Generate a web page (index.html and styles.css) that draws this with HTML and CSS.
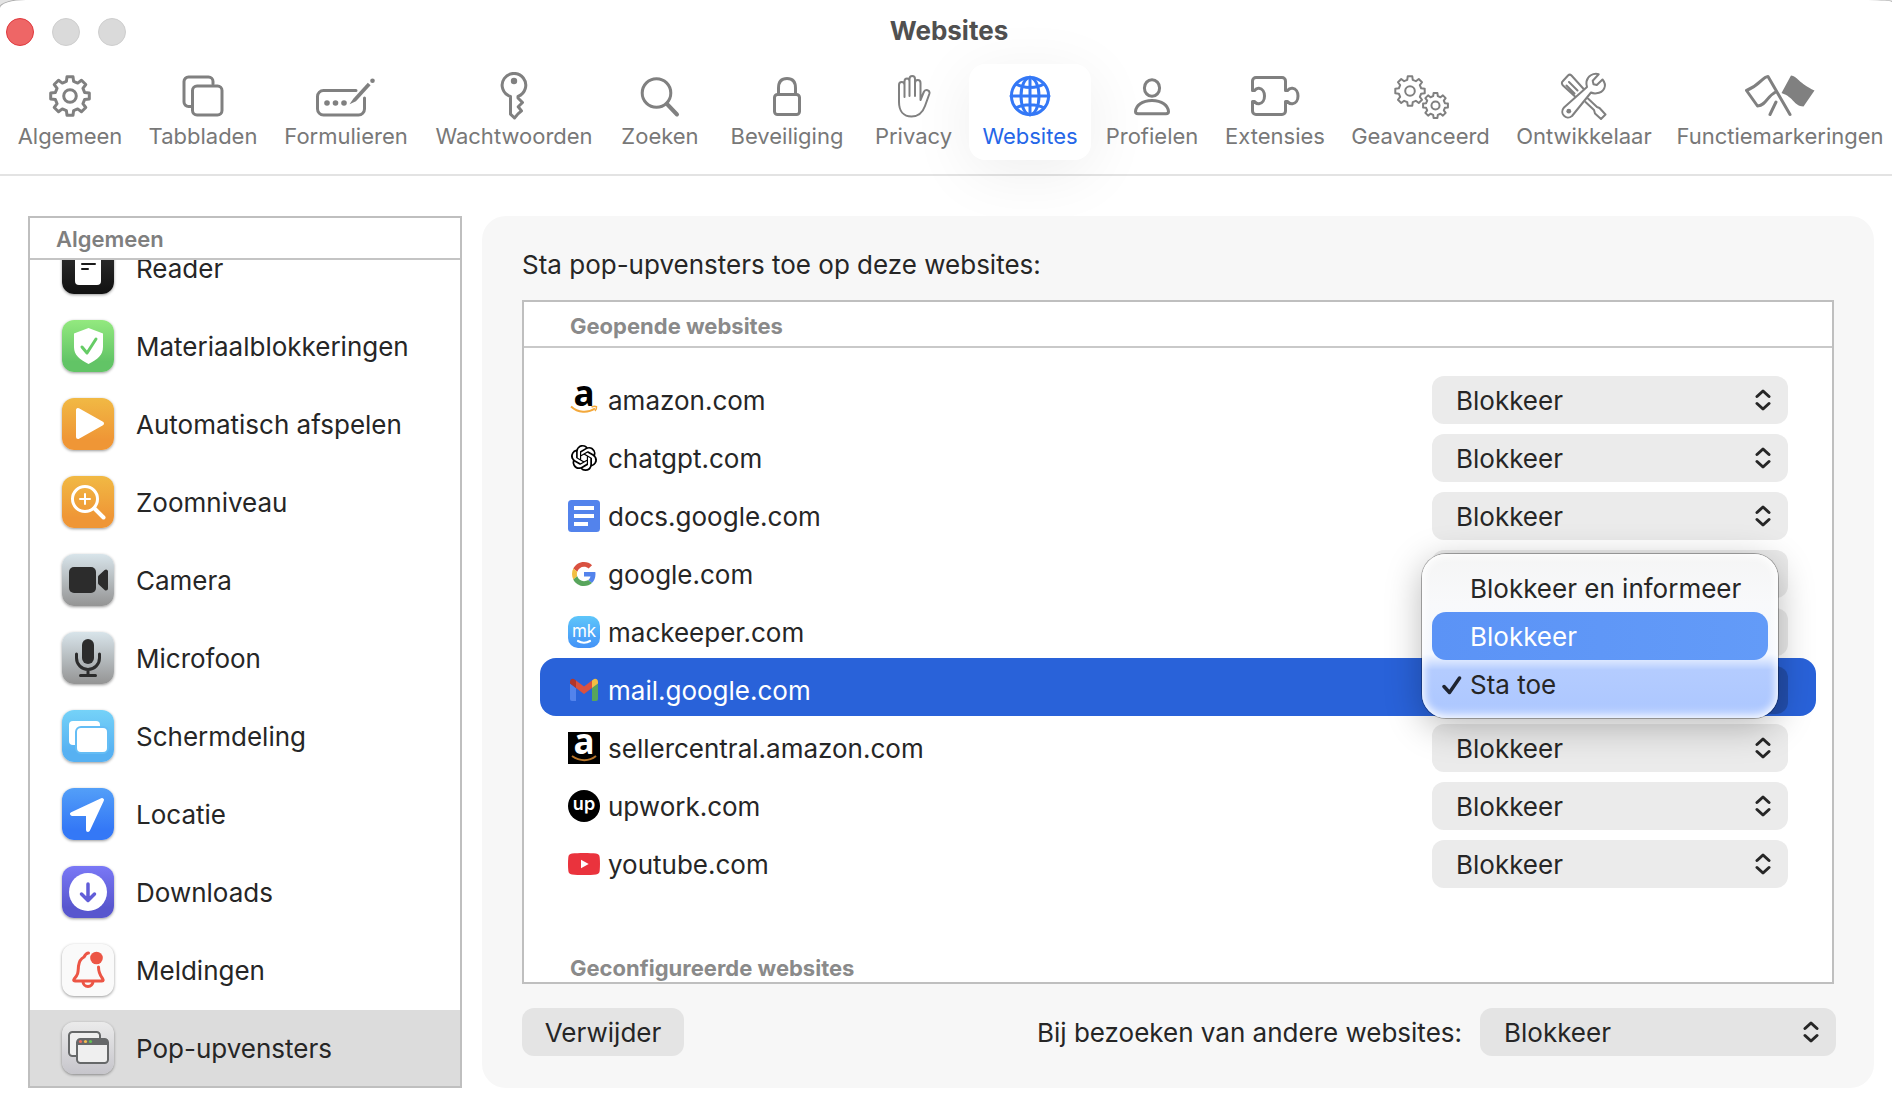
FILE: index.html
```html
<!DOCTYPE html>
<html lang="nl">
<head>
<meta charset="utf-8">
<meta name="viewport" content="width=device-width, initial-scale=1">
<title>Websites</title>
<link rel="stylesheet" href="styles.css">
</head>
<body>
<svg class="defs" aria-hidden="true">
  <symbol id="gear" viewBox="-21 -21 42 42">
    <path vector-effect="non-scaling-stroke" d="M-3.6-14.6-3-19.3 3-19.3 3.6-14.6 7.7-12.9 11.5-15.8 15.8-11.5 12.9-7.7 14.6-3.6 19.3-3 19.3 3 14.6 3.6 12.9 7.7 15.8 11.5 11.5 15.8 7.7 12.9 3.6 14.6 3 19.3-3 19.3-3.6 14.6-7.7 12.9-11.5 15.8-15.8 11.5-12.9 7.7-14.6 3.6-19.3 3-19.3-3-14.6-3.6-12.9-7.7-15.8-11.5-11.5-15.8-7.7-12.9Z"/>
    <circle vector-effect="non-scaling-stroke" r="6.3"/>
  </symbol>
  <symbol id="updown" viewBox="0 0 16 22">
    <path d="M2 7.500 8 2l6 5.500M2 14.500 8 20l6-5.500" fill="none" stroke="#262626" stroke-width="3" stroke-linecap="round" stroke-linejoin="round"/>
  </symbol>
</svg>
<div class="window">
  <header class="titlebar">
    <div class="lights">
      <button class="light light-close" aria-label="Sluit"></button>
      <button class="light" aria-label="Minimaliseer"></button>
      <button class="light" aria-label="Vergroot"></button>
    </div>
    <h1 class="title">Websites</h1>
  </header>

  <nav class="toolbar" aria-label="Instellingen">
    <button class="tab"><svg class="tab-icon" width="42" height="48"><use href="#gear" x="0" y="3" width="42" height="42"/></svg><span>Algemeen</span></button>
    <button class="tab"><svg class="tab-icon" width="42" height="48" viewBox="0 0 42 48"><path d="M9 34.500H6.500a4.500 4.500 0 0 1-4.500-4.500V9.500A4.500 4.500 0 0 1 6.500 5h20A4.500 4.500 0 0 1 31 9.500V12"/><rect x="10.500" y="14" width="29.500" height="29" rx="4.500"/></svg><span>Tabbladen</span></button>
    <button class="tab"><svg class="tab-icon" width="60" height="48" viewBox="0 0 60 48"><path d="M40 18.500H7.500a6 6 0 0 0-6 6V37a6 6 0 0 0 6 6h35a6 6 0 0 0 6-6V26"/><path class="solid" d="M33.500 32.200 37.500 26.500 51.800 10.800 54.600 13.300 40 29.200Z"/><circle class="solid" cx="56.500" cy="8.700" r="2.300"/><circle class="solid" cx="11" cy="31" r="2.800"/><circle class="solid" cx="19.500" cy="31" r="2.800"/><circle class="solid" cx="28" cy="31" r="2.800"/></svg><span>Formulieren</span></button>
    <button class="tab"><svg class="tab-icon" width="28" height="48" viewBox="0 0 28 48"><path d="M10.500 24.500A11.800 11.800 0 1 1 18 24.300V26l4.500 4.500-4.300 4.200 3.300 4.200-3.500 3L14.500 46l-4-3.800Z"/><circle class="solid" cx="14" cy="9" r="3.200"/></svg><span>Wachtwoorden</span></button>
    <button class="tab"><svg class="tab-icon" width="40" height="48" viewBox="0 0 40 48"><circle cx="16.500" cy="21" r="14.300"/><path class="bold" d="m27 32 10 10.500"/></svg><span>Zoeken</span></button>
    <button class="tab"><svg class="tab-icon" width="28" height="48" viewBox="0 0 28 48"><rect x="1.500" y="22.500" width="25" height="20" rx="3"/><path d="M5.500 22V16c0-6 3-9.500 8.500-9.500S22.500 10 22.500 16v6"/></svg><span>Beveiliging</span></button>
    <button class="tab"><svg class="tab-icon" width="34" height="48" viewBox="0 0 34 48"><path class="fine" d="M7.500 25V13c0-4-5.500-4-5.500 0v17c0 9 4.500 14.500 12.500 14.500 7 0 11-3.500 13.500-10.500l4.300-12c1.200-4-4-5.500-5.500-2L23.500 28V11c0-4-5.500-4-5.500 0v13M18 24V7c0-4-5.500-4-5.500 0v17M12.500 24V9.500C12.500 5.500 7.500 5.500 7.500 9.500V25"/></svg><span>Privacy</span></button>
    <button class="tab tab-active" aria-current="page"><svg class="tab-icon" width="42" height="48" viewBox="0 0 42 48"><circle cx="21" cy="24" r="18.600"/><ellipse cx="21" cy="24" rx="9" ry="18.600"/><path d="M2 24h38M21 5v38M7 12c7 4.500 21 4.500 28 0M7 36c7-4.500 21-4.500 28 0"/></svg><span>Websites</span></button>
    <button class="tab"><svg class="tab-icon" width="36" height="48" viewBox="0 0 36 48"><ellipse cx="18" cy="16" rx="7.600" ry="8.300"/><path d="M4 41.800c-1.500 0-2.500-.8-2.500-2.300C2 33.500 8 28.500 18 28.500s16 5 16.500 11c0 1.500-1 2.300-2.500 2.300Z"/></svg><span>Profielen</span></button>
    <button class="tab"><svg class="tab-icon" width="50" height="48" viewBox="0 0 50 48"><path d="M2.500 18.500V9a3.500 3.500 0 0 1 3.500-3.500h26A3.500 3.500 0 0 1 35.500 9v9.500h2c1.500-2 3.500-2.500 5-2.300 3.500.4 5.500 3.800 5.500 7.800s-2 7.400-5.500 7.800c-1.500.2-3.500-.3-5-2.300h-2V39a3.500 3.500 0 0 1-3.500 3.500H6A3.500 3.500 0 0 1 2.500 39v-9.500h2c1.500 2 3 2.500 4.500 2.300 3.500-.4 5.500-3.800 5.500-7.800S12.500 16.600 9 16.200c-1.500-.2-3 .3-4.500 2.300Z"/></svg><span>Extensies</span></button>
    <button class="tab"><svg class="tab-icon tab-icon-light" width="56" height="48"><use href="#gear" x="1" y="3" width="32" height="32"/><use href="#gear" x="29" y="20" width="27" height="27"/></svg><span>Geavanceerd</span></button>
    <button class="tab"><svg class="tab-icon" width="48" height="48" viewBox="0 0 48 48"><path class="fine" d="M2.500 9.500 8 3.500c1-1 2.500-1 3.500 0L25 18.500l-7.500 8.300L3 13.500c-1.200-1.200-1.500-3-.5-4ZM9 10l8.500 8.500M6.500 13.500l8 8M28 26.500 37 35l2.500 1 6 6.500-4.500 4.500-6-5.500-1-3.500L25.500 30"/><path class="fine page" d="M42.500 7.500 36.800 13l-3.300-.8-.8-3.500 6-6.500C33 .8 27.500 4 26.500 9.500c-.3 2 0 4 .5 5.500L4 35.500c-5 5.500 2 13.500 8 8.500L31 20.500c1.500.8 3.500 1 5.500.8C43.500 20.500 48 14 42.500 7.500Z"/><circle class="solid" cx="8.800" cy="39.200" r="2.400"/></svg><span>Ontwikkelaar</span></button>
    <button class="tab"><svg class="tab-icon" width="72" height="48" viewBox="0 0 72 48"><path class="mid" d="M46 42.500 24 4.500C18 5 17 12.500 2.500 18.500l11 15.500C23 33 22 24.500 32.500 19.500M26 42.500 32 30"/><path class="solid" d="M47 3.500c6 .5 8 8 23.500 15L59.500 34.500c-10-.5-9-9-22-13.500Z"/></svg><span>Functiemarkeringen</span></button>
  </nav>

  <main class="content">
    <nav class="sidebar" aria-label="Algemeen">
      <h2 class="sidebar-head">Algemeen</h2>
      <div class="sidebar-list">
        <button class="entry"><svg class="app app-black" viewBox="0 0 52 52"><rect x="13" y="8" width="26" height="35" rx="4" fill="#fff"/><path d="M20 14h12M20 22h13M20 27h6" stroke="#1a1a1a" stroke-width="2" stroke-linecap="round"/></svg><span class="entry-name">Reader</span></button>
        <button class="entry"><svg class="app app-green" viewBox="0 0 52 52"><path d="M26.500 8 41 13.500V27c0 8-5.500 12.500-14.500 17C17.500 39.500 12 35 12 27V13.500Z" fill="#fff"/><path d="m20 27 5 6L34 19" fill="none" stroke="#66cc66" stroke-width="3" stroke-linecap="round" stroke-linejoin="round"/></svg><span class="entry-name">Materiaalblokkeringen</span></button>
        <button class="entry"><svg class="app app-orange" viewBox="0 0 52 52"><path d="M16 12v27l24-13.500Z" fill="#fff" stroke="#fff" stroke-width="4" stroke-linejoin="round"/></svg><span class="entry-name">Automatisch afspelen</span></button>
        <button class="entry"><svg class="app app-orange" viewBox="0 0 52 52"><g fill="none" stroke="#fff" stroke-linecap="round"><circle cx="23" cy="23" r="12.500" stroke-width="3"/><path d="M23 18v10M18 23h10" stroke-width="2"/><path d="m33 33 8.500 8.500" stroke-width="4"/></g></svg><span class="entry-name">Zoomniveau</span></button>
        <button class="entry"><svg class="app app-silver" viewBox="0 0 52 52"><rect x="7" y="13" width="27" height="26" rx="5" fill="#2c2c2c"/><path d="m38 23 6-5.500V34.500L38 29Z" fill="#2c2c2c" stroke="#2c2c2c" stroke-width="4" stroke-linejoin="round"/></svg><span class="entry-name">Camera</span></button>
        <button class="entry"><svg class="app app-silver" viewBox="0 0 52 52"><rect x="20" y="7" width="12" height="25" rx="6" fill="#2c2c2c"/><path d="M14.500 22v4a11.500 11.500 0 0 0 23 0v-4M26 38v5M18.500 43.500h15" fill="none" stroke="#2c2c2c" stroke-width="3" stroke-linecap="round"/></svg><span class="entry-name">Microfoon</span></button>
        <button class="entry"><svg class="app app-sky" viewBox="0 0 52 52"><rect x="7" y="11" width="31" height="24" rx="4" fill="#fff"/><rect x="14" y="17" width="32" height="26" rx="5" fill="#fff" stroke="#64bdf5" stroke-width="2"/></svg><span class="entry-name">Schermdeling</span></button>
        <button class="entry"><svg class="app app-blue" viewBox="0 0 52 52"><path d="M40 12 10 26h16v16Z" fill="#fff" stroke="#fff" stroke-width="4" stroke-linejoin="round"/></svg><span class="entry-name">Locatie</span></button>
        <button class="entry"><svg class="app app-violet" viewBox="0 0 52 52"><circle cx="26" cy="26" r="19" fill="#fff"/><path d="M26 18v16M19.500 28l6.500 6.500 6.500-6.500" fill="none" stroke="#615dd8" stroke-width="3.500" stroke-linecap="round" stroke-linejoin="round"/></svg><span class="entry-name">Downloads</span></button>
        <button class="entry"><svg class="app app-white" viewBox="0 0 52 52"><g fill="none" stroke="#ec5545" stroke-width="3" stroke-linecap="round" stroke-linejoin="round"><path d="M26.500 9c-2.500 0-3.500 2-4.500 4-4 2-5 5-5.500 9-.5 6 0 8-4 12.500-1.500 2-.8 2.500.5 2.500h27c1.500 0 1.500-1 .5-2.500-3-4-4-6-4-11.500"/><path d="M21 37.500a5 5 0 0 0 10 0"/></g><circle cx="34.500" cy="14" r="6.300" fill="#ec5545"/></svg><span class="entry-name">Meldingen</span></button>
        <button class="entry entry-active" aria-current="true"><svg class="app app-grey" viewBox="0 0 52 52"><rect x="7" y="10" width="31" height="24" rx="3.500" fill="#efefef" stroke="#666869" stroke-width="2"/><rect x="15" y="17" width="31" height="24" rx="3.500" fill="#efefef" stroke="#666869" stroke-width="2"/><path d="M15 23v-3a3 3 0 0 1 3-3h25a3 3 0 0 1 3 3v3Z" fill="#666869"/><circle cx="18.500" cy="19.500" r="1.600" fill="#ee6a5f"/><circle cx="23.500" cy="19.500" r="1.600" fill="#f5bd4f"/><circle cx="28.500" cy="19.500" r="1.600" fill="#61c454"/></svg><span class="entry-name">Pop-upvensters</span></button>
      </div>
    </nav>

    <section class="panel">
      <h2 class="panel-title">Sta pop-upvensters toe op deze websites:</h2>
      <div class="sites">
        <h3 class="group group-first">Geopende websites</h3>
        <ul class="site-list">
          <li class="site">
            <svg class="favicon" viewBox="0 0 32 32"><text x="16" y="22" text-anchor="middle" class="logo-a">a</text><path d="M3 22.500C10 29 20 29.300 27 24.500" fill="none" stroke="#f3a83b" stroke-width="2"/><path d="M23.500 23c2-.8 4-.8 5-.3.200 1.500-.5 3.300-1.500 4.300" fill="none" stroke="#f3a83b" stroke-width="1.500"/></svg>
            <label class="site-name" for="s1">amazon.com</label>
            <span class="popup"><select id="s1"><option>Blokkeer</option><option>Blokkeer en informeer</option><option>Sta toe</option></select><svg class="chevrons"><use href="#updown"/></svg></span>
          </li>
          <li class="site">
            <svg class="favicon" viewBox="-2.700 -2.700 29.400 29.400"><path d="M22.282 9.821a5.985 5.985 0 0 0-.516-4.910 6.046 6.046 0 0 0-6.510-2.900A6.065 6.065 0 0 0 4.981 4.182a5.985 5.985 0 0 0-3.998 2.900 6.046 6.046 0 0 0 .743 7.097 5.980 5.980 0 0 0 .511 4.911 6.051 6.051 0 0 0 6.515 2.900A5.985 5.985 0 0 0 13.260 24a6.056 6.056 0 0 0 5.772-4.206 5.990 5.990 0 0 0 3.998-2.900 6.056 6.056 0 0 0-.748-7.073zm-9.022 12.608a4.476 4.476 0 0 1-2.876-1.041l.142-.080 4.778-2.758a.795.795 0 0 0 .393-.681v-6.737l2.020 1.169a.071.071 0 0 1 .038.052v5.583a4.504 4.504 0 0 1-4.495 4.494zm-9.661-4.125a4.471 4.471 0 0 1-.535-3.014l.142.085 4.783 2.758a.771.771 0 0 0 .781 0l5.843-3.369v2.332a.080.080 0 0 1-.033.062L9.740 19.950a4.499 4.499 0 0 1-6.141-1.646zM2.341 7.896a4.485 4.485 0 0 1 2.366-1.973V11.600a.766.766 0 0 0 .388.677l5.814 3.354-2.020 1.169a.076.076 0 0 1-.071 0l-4.830-2.787A4.504 4.504 0 0 1 2.341 7.872zm16.596 3.856L13.104 8.364 15.119 7.200a.076.076 0 0 1 .071 0l4.830 2.791a4.494 4.494 0 0 1-.677 8.104v-5.677a.790.790 0 0 0-.407-.667zm2.011-3.023l-.142-.085-4.774-2.782a.776.776 0 0 0-.785 0L9.409 9.230V6.897a.066.066 0 0 1 .028-.062l4.830-2.787a4.499 4.499 0 0 1 6.680 4.660zM8.307 12.863l-2.020-1.164a.080.080 0 0 1-.038-.057V6.074a4.499 4.499 0 0 1 7.376-3.454l-.142.081L8.704 5.459a.795.795 0 0 0-.393.681zm1.098-2.365l2.602-1.500 2.607 1.500v2.999l-2.597 1.500-2.607-1.500Z"/></svg>
            <label class="site-name" for="s2">chatgpt.com</label>
            <span class="popup"><select id="s2"><option>Blokkeer</option><option>Blokkeer en informeer</option><option>Sta toe</option></select><svg class="chevrons"><use href="#updown"/></svg></span>
          </li>
          <li class="site">
            <svg class="favicon" viewBox="0 0 32 32"><rect width="32" height="32" rx="3.500" fill="#5383ec"/><path d="M6 6h20v4H6zM6 14h20v4H6zM6 22h14v4H6z" fill="#fff"/></svg>
            <label class="site-name" for="s3">docs.google.com</label>
            <span class="popup"><select id="s3"><option>Blokkeer</option><option>Blokkeer en informeer</option><option>Sta toe</option></select><svg class="chevrons"><use href="#updown"/></svg></span>
          </li>
          <li class="site">
            <svg class="favicon" viewBox="-8 -8 64 64"><path fill="#d95140" d="M24 9.500c3.540 0 6.710 1.220 9.210 3.600l6.850-6.850C35.900 2.380 30.470 0 24 0 14.620 0 6.510 5.380 2.560 13.220l7.980 6.190C12.430 13.720 17.740 9.500 24 9.500z"/><path fill="#5383ec" d="M46.980 24.550c0-1.570-.150-3.090-.380-4.550H24v9.020h12.940c-.580 2.960-2.260 5.480-4.780 7.180l7.730 6c4.510-4.180 7.090-10.360 7.090-17.650z"/><path fill="#f2be42" d="M10.530 28.590c-.480-1.450-.760-2.990-.760-4.590s.270-3.140.760-4.590l-7.980-6.190C.920 16.460 0 20.120 0 24c0 3.880.920 7.540 2.560 10.780l7.970-6.190z"/><path fill="#58a55c" d="M24 48c6.480 0 11.930-2.130 15.890-5.810l-7.730-6c-2.150 1.450-4.920 2.300-8.160 2.300-6.260 0-11.570-4.220-13.470-9.910l-7.980 6.190C6.510 42.620 14.620 48 24 48z"/></svg>
            <label class="site-name" for="s4">google.com</label>
            <span class="popup"><select id="s4"><option>Blokkeer</option><option>Blokkeer en informeer</option><option>Sta toe</option></select><svg class="chevrons"><use href="#updown"/></svg></span>
          </li>
          <li class="site">
            <svg class="favicon" viewBox="0 0 32 32"><defs><linearGradient id="mk" x2="0" y2="1"><stop stop-color="#5ec6fa"/><stop offset="1" stop-color="#4392f7"/></linearGradient></defs><rect width="32" height="32" rx="10" fill="url(#mk)"/><path d="M10 25c3.500 2.200 8.500 2.200 12 0" fill="none" stroke="#fff" stroke-width="2.200" stroke-linecap="round"/><text x="16" y="21" text-anchor="middle" class="logo-mk">mk</text></svg>
            <label class="site-name" for="s5">mackeeper.com</label>
            <span class="popup"><select id="s5"><option>Blokkeer</option><option>Blokkeer en informeer</option><option>Sta toe</option></select><svg class="chevrons"><use href="#updown"/></svg></span>
          </li>
          <li class="site site-active">
            <svg class="favicon" viewBox="0 0 32 32"><path fill="#5383ec" d="M2 9.500l6 4.500v13H4a2 2 0 0 1-2-2z"/><path fill="#58a55c" d="M30 9.500 24 14v13h4a2 2 0 0 0 2-2z"/><path fill="#d95140" d="M8 6.500l8 6 8-6V14l-8 6-8-6z"/><path fill="#b3362a" d="M2 9V8c0-3 3-4 5-2.300l1 .8V14l-6-4.500z"/><path fill="#f2be42" d="M30 9V8c0-3-3-4-5-2.300l-1 .8V14l6-4.500z"/></svg>
            <label class="site-name" for="s6">mail.google.com</label>
            <span class="popup"><select id="s6"><option></option><option>Blokkeer en informeer</option><option>Blokkeer</option><option>Sta toe</option></select>
              <span class="menu" role="menu">
                <button class="menu-item" role="menuitemradio" aria-checked="false">Blokkeer en informeer</button>
                <button class="menu-item menu-item-hover" role="menuitemradio" aria-checked="false">Blokkeer</button>
                <button class="menu-item" role="menuitemradio" aria-checked="true"><svg class="check" viewBox="0 0 20 20"><path d="m2 11.500 5.500 6L17.500 3" fill="none" stroke="#1f2430" stroke-width="3.500" stroke-linecap="round" stroke-linejoin="round"/></svg>Sta toe</button>
              </span>
            </span>
          </li>
          <li class="site">
            <svg class="favicon" viewBox="0 0 32 32"><rect width="32" height="32"/><text x="16" y="22" text-anchor="middle" class="logo-a logo-light">a</text><path d="M4 24c8 5.500 17 5.500 24 0" fill="none" stroke="#b8762b" stroke-width="2"/></svg>
            <label class="site-name" for="s7">sellercentral.amazon.com</label>
            <span class="popup"><select id="s7"><option>Blokkeer</option><option>Blokkeer en informeer</option><option>Sta toe</option></select><svg class="chevrons"><use href="#updown"/></svg></span>
          </li>
          <li class="site">
            <svg class="favicon" viewBox="0 0 32 32"><circle cx="16" cy="16" r="16"/><text x="16" y="20" text-anchor="middle" class="logo-up">up</text></svg>
            <label class="site-name" for="s8">upwork.com</label>
            <span class="popup"><select id="s8"><option>Blokkeer</option><option>Blokkeer en informeer</option><option>Sta toe</option></select><svg class="chevrons"><use href="#updown"/></svg></span>
          </li>
          <li class="site">
            <svg class="favicon" viewBox="0 0 32 32"><path d="M4 5.500c6-.7 18-.7 24 0 2.500.3 3.500 1.500 3.700 4 .4 4 .4 9 0 13-.2 2.500-1.200 3.700-3.700 4-6 .7-18 .7-24 0-2.500-.3-3.500-1.500-3.700-4-.4-4-.4-9 0-13C.5 7 1.500 5.800 4 5.500Z" fill="#ea333d"/><path d="M13 11.800v8.400l7.700-4.200Z" fill="#fff"/></svg>
            <label class="site-name" for="s9">youtube.com</label>
            <span class="popup"><select id="s9"><option>Blokkeer</option><option>Blokkeer en informeer</option><option>Sta toe</option></select><svg class="chevrons"><use href="#updown"/></svg></span>
          </li>
        </ul>
        <h3 class="group">Geconfigureerde websites</h3>
      </div>
      <footer class="panel-foot">
        <button class="remove">Verwijder</button>
        <label class="default-label" for="default">Bij bezoeken van andere websites:</label>
        <span class="popup popup-default"><select id="default"><option>Blokkeer</option><option>Blokkeer en informeer</option><option>Sta toe</option></select><svg class="chevrons"><use href="#updown"/></svg></span>
      </footer>
    </section>
  </main>
</div>
</body>
</html>
```
FILE: styles.css
```css
* {
  box-sizing: border-box;
}

body {
  margin: 0;
  background: #e4e4e4;
  color: #262626;
  font: 26px/32px Inter, "Liberation Sans", sans-serif;
}

button,
select {
  margin: 0;
  padding: 0;
  border: 0;
  background: none;
  color: inherit;
  font: inherit;
}

h1,
h2,
h3,
ul {
  margin: 0;
  padding: 0;
}

svg {
  display: block;
  flex: none;
}

.defs {
  position: absolute;
  width: 0;
  height: 0;
}

.window {
  display: flex;
  flex-direction: column;
  height: 100vh;
  border-radius: 26px 24px 0 0 / 8px 2px 0 0;
  background: #fff;
  box-shadow: 0 0 0 1px #a8a8a8;
  overflow: hidden;
}

/* Title bar */

.titlebar {
  display: grid;
  grid-template-columns: 1fr auto 1fr;
  align-items: center;
  height: 64px;
  padding: 0 0 0 6px;
}

.lights {
  display: flex;
  gap: 18px;
}

.light {
  width: 28px;
  height: 28px;
  border: 1px solid #cecece;
  border-radius: 50%;
  background: #dadada;
}

.light-close {
  border-color: #e0393e;
  background: #ee6666;
}

.title {
  padding-bottom: 2px;
  color: #505050;
  font-size: 26px;
  font-weight: 700;
}

/* Toolbar */

.toolbar {
  display: grid;
  grid-template-columns: 128fr 130fr 148fr 180fr 104fr 142fr 103fr 122fr 114fr 124fr 159fr 160fr 224fr;
  gap: 4px;
  height: 112px;
  padding: 0 0 14px 6px;
  border-bottom: 2px solid #e3e3e3;
}

.tab {
  display: flex;
  flex-direction: column;
  align-items: center;
  gap: 2px;
  min-width: 0;
  padding: 8px 0;
  border-radius: 16px;
  color: #787878;
  font-size: 22px;
  line-height: 28px;
  white-space: nowrap;
}

.tab-active {
  background: #fff;
  color: #2566e8;
  box-shadow: 0 12px 64px rgba(0, 0, 0, 0.07);
}

.tab-icon {
  fill: none;
  stroke: #808080;
  stroke-width: 3px;
  stroke-linecap: round;
  stroke-linejoin: round;
}

.tab-icon-light {
  stroke-width: 2px;
}

.tab-active .tab-icon {
  stroke: #3478f6;
}

.tab-icon .solid {
  fill: #808080;
  stroke: none;
}

.tab-icon .bold {
  stroke-width: 4px;
}

.tab-icon .mid {
  stroke-width: 3px;
}

.tab-icon .fine {
  stroke-width: 2px;
}

.tab-icon .page {
  fill: #fff;
}

/* Sidebar */

.content {
  display: flex;
  flex: 1;
  gap: 20px;
  min-height: 0;
  padding: 40px 18px 22px 28px;
}

.sidebar {
  display: flex;
  flex: none;
  flex-direction: column;
  width: 434px;
  border: 2px solid #bfbfbf;
}

.sidebar-head {
  flex: none;
  height: 42px;
  padding: 5px 26px;
  border-bottom: 2px solid #c4c4c4;
  color: #7f7f7f;
  font-size: 22px;
  font-weight: 600;
}

.sidebar-list {
  display: flex;
  flex: 1;
  flex-direction: column;
  justify-content: flex-end;
  gap: 2px;
  min-height: 0;
  overflow: hidden;
}

.entry {
  display: flex;
  flex: none;
  align-items: center;
  gap: 22px;
  height: 76px;
  padding: 0 32px;
  text-align: left;
}

.entry-active {
  background: #dcdcdc;
}

.entry-name {
  padding-top: 2px;
}

.app {
  width: 52px;
  height: 52px;
  border-radius: 12px;
  box-shadow: 0 1px 3px rgba(0, 0, 0, 0.4);
}

.app-black { background: linear-gradient(#333, #111); }
.app-green { background: linear-gradient(#93e97f, #62c466 80%); }
.app-orange { background: linear-gradient(#f1b944, #ef9636 80%); }
.app-silver { background: linear-gradient(#d8e4ea, #949494); }
.app-sky { background: linear-gradient(#75d2f8, #57b1f2 80%); }
.app-blue { background: linear-gradient(#539ff8, #3478f6 80%); }
.app-violet { background: linear-gradient(#7a78f6, #5856ce 80%); }
.app-white { background: #fafafa; }
.app-grey { background: linear-gradient(#ebebeb, #c6c5cb); }

/* Site panel */

.panel {
  display: flex;
  flex: 1;
  flex-direction: column;
  min-width: 0;
  padding: 33px 38px 32px 40px;
  border-radius: 24px;
  background: #f7f7f7;
}

.panel-title {
  flex: none;
  margin-bottom: 19px;
  font-size: 26px;
  font-weight: 400;
}

.sites {
  flex: 1;
  min-height: 0;
  margin-right: 2px;
  border: 2px solid #bfbfbf;
  background: #fff;
  overflow: hidden;
}

.group {
  height: 46px;
  padding: 8px 46px;
  color: #8a8a8a;
  font-size: 22px;
  font-weight: 700;
}

.group-first {
  border-bottom: 2px solid #c9c9c9;
}

.site-list {
  padding: 20px 16px 54px;
  list-style: none;
}

.site {
  display: flex;
  align-items: center;
  gap: 8px;
  height: 58px;
  padding: 8px 28px 2px;
  border-radius: 16px;
}

.site-active {
  background: #2962d9;
  color: #fff;
}

.favicon {
  width: 32px;
  height: 32px;
  overflow: visible;
}

.logo-a {
  font: 700 35px "Open Sans", sans-serif;
}

.logo-light {
  fill: #fff;
}

.logo-mk {
  fill: #fff;
  font: 400 17px Inter, sans-serif;
}

.logo-up {
  fill: #fff;
  font: 600 18px Inter, sans-serif;
}

.site-name {
  flex: 1;
  padding-top: 2px;
}

.popup {
  display: grid;
  position: relative;
  flex: none;
  align-items: center;
  width: 356px;
  height: 48px;
  border-radius: 12px;
  background: #ebebeb;
}

.popup select {
  grid-area: 1 / 1;
  width: 100%;
  height: 48px;
  padding: 2px 48px 0 24px;
  appearance: none;
}

.chevrons {
  grid-area: 1 / 1;
  justify-self: end;
  width: 16px;
  height: 22px;
  margin-right: 17px;
  pointer-events: none;
}

.site-active .popup {
  background: #234fae;
}

.popup-default,
.remove {
  background: #e4e4e4;
}

/* Open menu */

.menu {
  display: flex;
  position: absolute;
  z-index: 1;
  top: -112px;
  left: -10px;
  flex-direction: column;
  width: 356px;
  padding: 10px;
  border-radius: 24px;
  background: linear-gradient(#f5f5f5, #f8f9fb 50px, #f4f8ff 100px, #b4ccff 116px, #aec8ff 150px, #b9cfff);
  box-shadow: inset 0 0 8px 2px #fff, 0 0 0 1px rgba(0, 0, 0, 0.3), 0 8px 36px rgba(0, 0, 0, 0.28);
  color: #262626;
}

.menu-item {
  display: flex;
  position: relative;
  align-items: center;
  height: 48px;
  padding: 2px 0 0 38px;
  border-radius: 14px;
}

.menu-item-hover {
  background: linear-gradient(90deg, #5b93f6, #639bf8);
  color: #fff;
}

.check {
  position: absolute;
  left: 10px;
  width: 20px;
  height: 20px;
}

/* Panel footer */

.panel-foot {
  display: flex;
  flex: none;
  align-items: center;
  gap: 18px;
  margin-top: 24px;
}

.remove {
  width: 162px;
  height: 48px;
  padding-top: 2px;
  border-radius: 12px;
}

.default-label {
  margin-left: auto;
  padding-top: 2px;
}
```
